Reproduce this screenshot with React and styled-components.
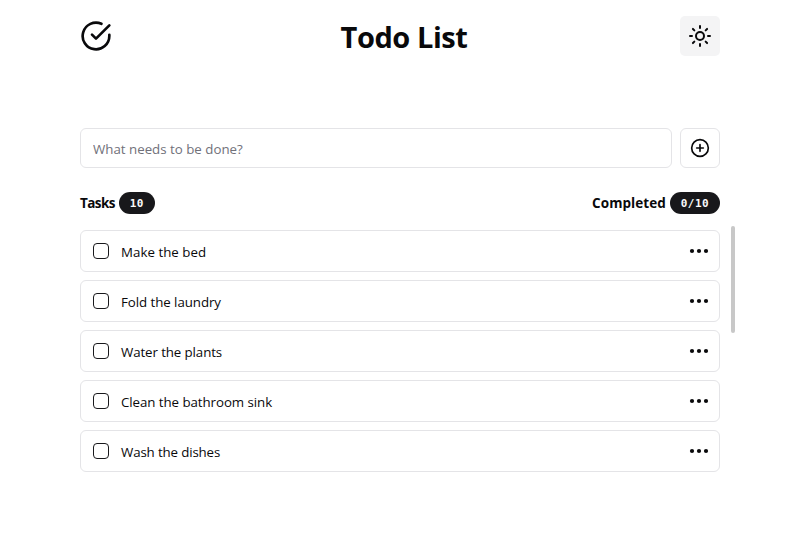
import React from "react";
import styled, { createGlobalStyle } from "styled-components";

const GlobalStyle = createGlobalStyle`
  *, *::before, *::after { box-sizing: border-box; }
  body {
    margin: 0;
    background: #fff;
    color: #09090b;
    font-family: "Open Sans", "Noto Sans", sans-serif;
    font-size: 13.3px;
    line-height: 20px;
  }
  button { font: inherit; color: inherit; cursor: pointer; }
`;

const Page = styled.main`
  width: 640px;
  height: 540px;
  margin: 0 auto;
  padding-top: 16px;
`;

const Header = styled.header`
  height: 40px;
  display: flex;
  align-items: center;
  justify-content: space-between;
`;

const Title = styled.h1`
  margin: 2px 0 0 16px;
  font-size: 29px;
  line-height: 36px;
  font-weight: 700;
  letter-spacing: -0.45px;
  white-space: nowrap;
`;

const IconButton = styled.button`
  width: 40px;
  height: 40px;
  padding: 0;
  flex: none;
  display: flex;
  align-items: center;
  justify-content: center;
  border: ${(p) => (p.$filled ? "0" : "1px solid #e4e4e7")};
  border-radius: ${(p) => (p.$filled ? "5px" : "6px")};
  background: ${(p) => (p.$filled ? "#f4f4f5" : "#fff")};
`;

const Form = styled.div`
  display: flex;
  gap: 8px;
  margin-top: 72px;
`;

const Input = styled.input`
  flex: 1;
  height: 40px;
  padding: 2px 12px 0;
  border: 1px solid #e4e4e7;
  border-radius: 6px;
  background: #fff;
  font: inherit;
  outline: none;
  &::placeholder { color: #71717a; opacity: 1; }
`;

const Stats = styled.div`
  display: flex;
  justify-content: space-between;
  margin-top: 24px;
  height: 22px;
`;

const Stat = styled.div`
  display: flex;
  align-items: center;
  gap: 4px;
`;

const StatLabel = styled.span`
  font-size: 13.5px;
  font-weight: 700;
  letter-spacing: ${(p) => p.$tracking};
`;

const Badge = styled.span`
  width: ${(p) => p.$width};
  height: 22px;
  border-radius: 11px;
  background: #18181b;
  color: #fafafa;
  font: 700 11px/23px "DejaVu Sans Mono", monospace;
  letter-spacing: 0.5px;
  text-align: center;
`;

const ListArea = styled.section`
  display: flex;
  gap: 11px;
  width: 655px;
  margin-top: 12px;
`;

const List = styled.ul`
  width: 640px;
  flex: none;
  margin: 0;
  padding: 4px 0 0;
  list-style: none;
  display: flex;
  flex-direction: column;
  gap: 8px;
`;

const Task = styled.li`
  height: 42px;
  padding: 0 10px 0 12px;
  display: flex;
  align-items: center;
  border: 1px solid #e4e4e7;
  border-radius: 6px;
`;

const Checkbox = styled.button`
  width: 16px;
  height: 16px;
  padding: 0;
  border: 1px solid #18181b;
  border-radius: 4px;
  background: #fff;
`;

const TaskText = styled.span`
  flex: 1;
  margin: 2px 0 0 12px;
  letter-spacing: ${(p) => p.$tracking};
`;

const MenuButton = styled.button`
  display: flex;
  padding: 0;
  border: 0;
  background: none;
`;

const ScrollThumb = styled.div`
  width: 4px;
  height: 107px;
  flex: none;
  border-radius: 2px;
  background: #c8c8c8;
`;

const Icon = styled.svg.attrs({ viewBox: "0 0 24 24" })`
  width: ${(p) => p.$size}px;
  height: ${(p) => p.$size}px;
  display: block;
  fill: none;
  stroke: currentColor;
  stroke-width: 2;
  stroke-linecap: round;
  stroke-linejoin: round;
`;

const Dots = styled.svg`
  display: block;
  fill: #09090b;
`;

const tasks = [
  { text: "Make the bed", tracking: "0.03px" },
  { text: "Fold the laundry", tracking: "-0.06px" },
  { text: "Water the plants", tracking: "-0.1px" },
  { text: "Clean the bathroom sink", tracking: "-0.06px" },
  { text: "Wash the dishes", tracking: "-0.14px" },
];

export default function App() {
  return (
    <>
      <GlobalStyle />
      <Page>
        <Header>
          <Icon $size={32}>
            <path d="M22 11.08V12a10 10 0 1 1-5.93-9.14" />
            <path d="m9 11 3 3L22 4" />
          </Icon>
          <Title>Todo List</Title>
          <IconButton $filled aria-label="Toggle theme">
            <Icon $size={24}>
              <circle cx="12" cy="12" r="4" />
              <path d="M12 2v2M12 20v2M4.93 4.93l1.41 1.41M17.66 17.66l1.41 1.41M2 12h2M20 12h2M6.34 17.66l-1.41 1.41M19.07 4.93l-1.41 1.41" />
            </Icon>
          </IconButton>
        </Header>
        <Form>
          <Input placeholder="What needs to be done?" />
          <IconButton aria-label="Add task">
            <Icon $size={20}>
              <circle cx="12" cy="12" r="10" />
              <path d="M8 12h8M12 8v8" />
            </Icon>
          </IconButton>
        </Form>
        <Stats>
          <Stat>
            <StatLabel $tracking="-0.6px">Tasks</StatLabel>
            <Badge $width="36px">10</Badge>
          </Stat>
          <Stat>
            <StatLabel $tracking="0.08px">Completed</StatLabel>
            <Badge $width="50px">0/10</Badge>
          </Stat>
        </Stats>
        <ListArea>
          <List>
            {tasks.map((task) => (
              <Task key={task.text}>
                <Checkbox role="checkbox" aria-checked="false" aria-label={task.text} />
                <TaskText $tracking={task.tracking}>{task.text}</TaskText>
                <MenuButton aria-label="Task options">
                  <Dots width="20" height="20" viewBox="0 0 20 20">
                    <circle cx="3" cy="10" r="2.1" />
                    <circle cx="10" cy="10" r="2.1" />
                    <circle cx="17" cy="10" r="2.1" />
                  </Dots>
                </MenuButton>
              </Task>
            ))}
          </List>
          <ScrollThumb />
        </ListArea>
      </Page>
    </>
  );
}
